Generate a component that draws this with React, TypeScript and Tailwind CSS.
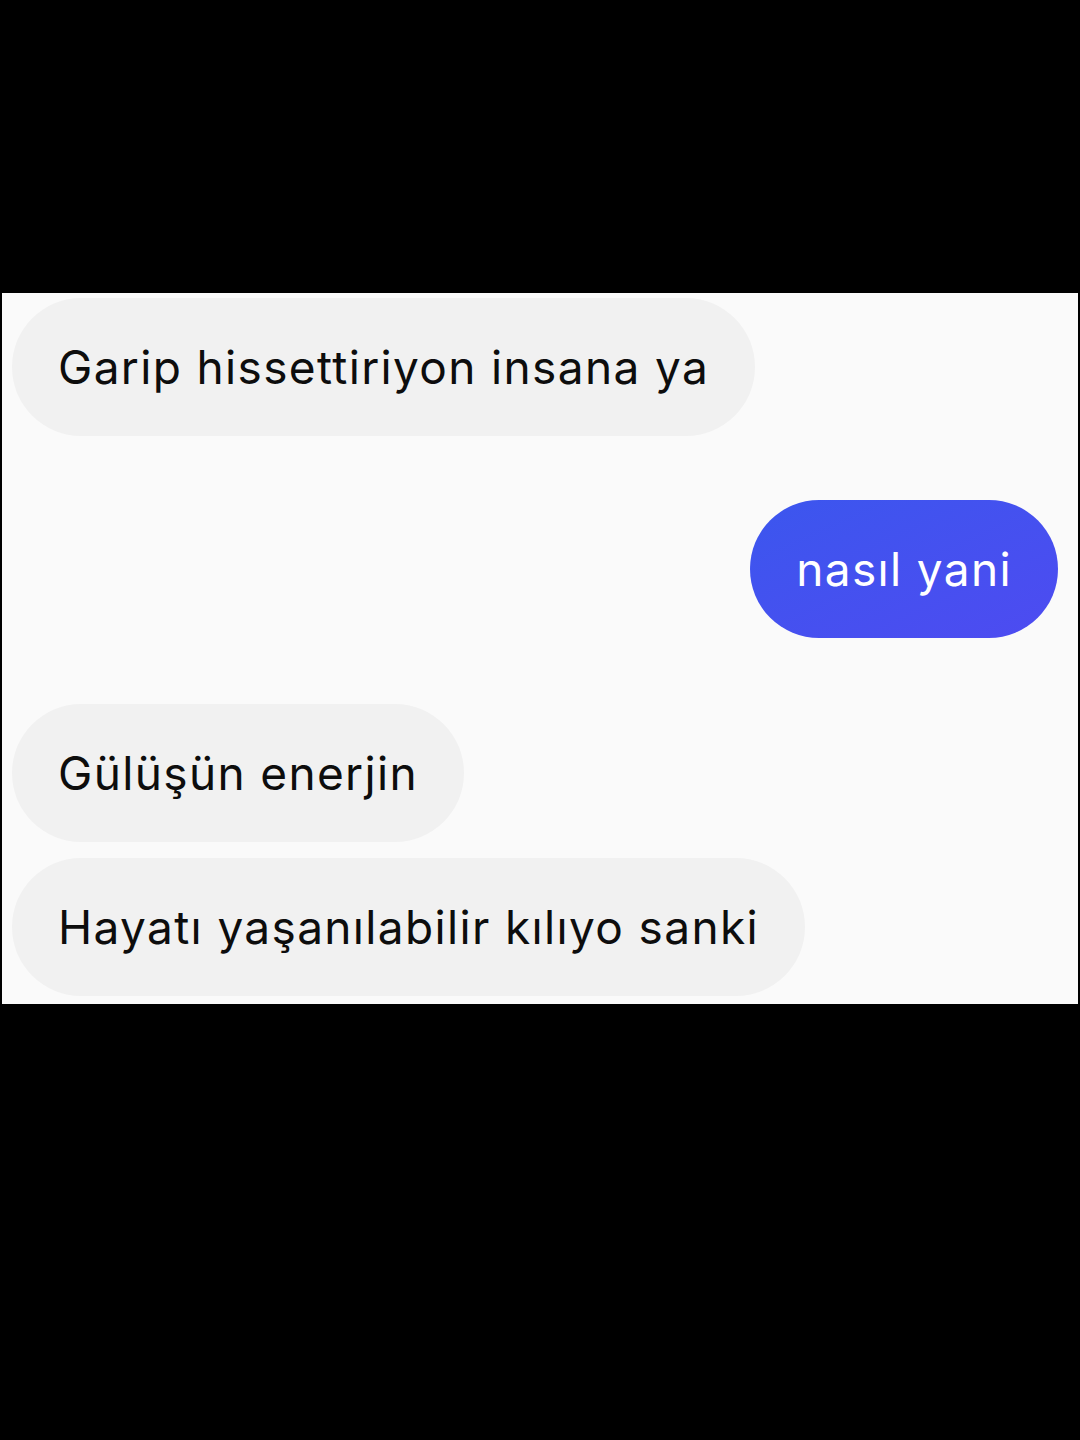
const messages = [
  { text: "Garip hissettiriyon insana ya", mine: false, mt: "mt-[5px]" },
  { text: "nasıl yani", mine: true, mt: "mt-[64px]" },
  { text: "Gülüşün enerjin", mine: false, mt: "mt-[66px]" },
  { text: "Hayatı yaşanılabilir kılıyo sanki", mine: false, mt: "mt-[16px]" },
];

const App = () => {
  return (
    <div className="min-h-[1440px] w-full bg-black pt-[293px] font-['Inter',sans-serif]">
      {/* Chat panel */}
      <div className="mx-[2px] h-[711px] bg-[#fafafa] pl-[10px] pr-[20px] flex flex-col">
        {messages.map((m, i) => (
          <div key={i} className={`flex ${m.mine ? "justify-end" : "justify-start"} ${m.mt}`}>
            <div
              className={
                m.mine
                  ? "h-[138px] rounded-full px-[46px] flex items-center bg-gradient-to-br from-[#3b56ee] to-[#4d4bf1] text-white"
                  : "h-[138px] rounded-full px-[46px] flex items-center bg-[#f1f1f1] text-[#0d0d0d]"
              }
            >
              <span className="text-[46px] leading-none tracking-[1.35px] whitespace-nowrap">{m.text}</span>
            </div>
          </div>
        ))}
      </div>
    </div>
  );
};

export default App;
